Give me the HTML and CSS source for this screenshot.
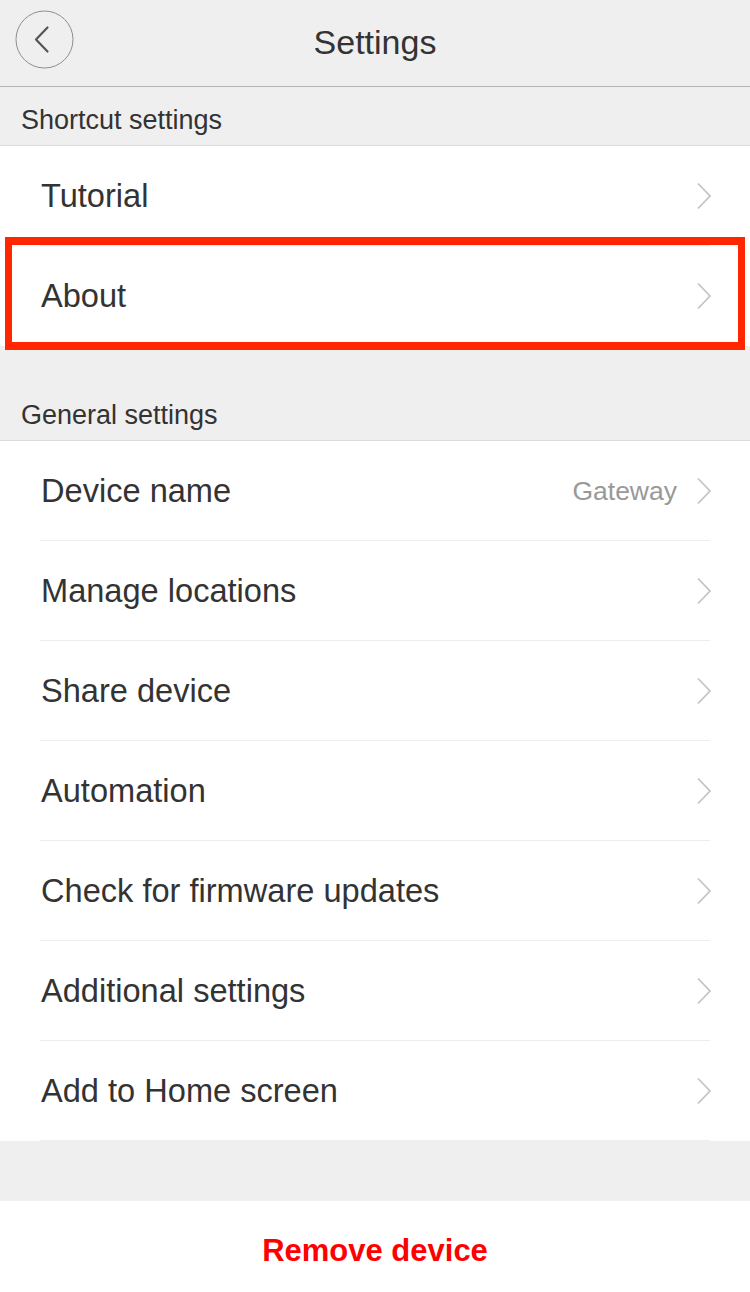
FILE: index.html
```html
<!DOCTYPE html>
<html>
<head>
<meta charset="utf-8">
<link rel="stylesheet" href="styles.css">
</head>
<body>
<div class="page">
  <header class="topbar">
    <button class="back" aria-label="Back">
      <svg width="60" height="60" viewBox="0 0 60 60">
        <circle cx="29.5" cy="29.5" r="28.5" fill="none" stroke="#8e8e8e" stroke-width="1"/>
        <path d="M32.5 17.5 L21 29.5 L32.5 41.5" fill="none" stroke="#555" stroke-width="2.2" stroke-linecap="round" stroke-linejoin="round"/>
      </svg>
    </button>
    <h1 class="title">Settings</h1>
  </header>

  <div class="section-title first">Shortcut settings</div>
  <div class="group">
    <div class="row"><div class="row-inner"><span class="label">Tutorial</span><span class="right"><svg class="chev" width="16" height="28" viewBox="0 0 16 28"><path d="M2 1.5 L14 14 L2 26.5" fill="none" stroke="#c4c4c4" stroke-width="1.8"/></svg></span></div></div>
    <div class="row highlighted"><div class="row-inner"><span class="label">About</span><span class="right"><svg class="chev" width="16" height="28" viewBox="0 0 16 28"><path d="M2 1.5 L14 14 L2 26.5" fill="none" stroke="#c4c4c4" stroke-width="1.8"/></svg></span></div><div class="mark"></div></div>
  </div>

  <div class="section-title second">General settings</div>
  <div class="group">
    <div class="row"><div class="row-inner"><span class="label">Device name</span><span class="right"><span class="value">Gateway</span><svg class="chev" width="16" height="28" viewBox="0 0 16 28"><path d="M2 1.5 L14 14 L2 26.5" fill="none" stroke="#c4c4c4" stroke-width="1.8"/></svg></span></div></div>
    <div class="row"><div class="row-inner"><span class="label">Manage locations</span><span class="right"><svg class="chev" width="16" height="28" viewBox="0 0 16 28"><path d="M2 1.5 L14 14 L2 26.5" fill="none" stroke="#c4c4c4" stroke-width="1.8"/></svg></span></div></div>
    <div class="row"><div class="row-inner"><span class="label">Share device</span><span class="right"><svg class="chev" width="16" height="28" viewBox="0 0 16 28"><path d="M2 1.5 L14 14 L2 26.5" fill="none" stroke="#c4c4c4" stroke-width="1.8"/></svg></span></div></div>
    <div class="row"><div class="row-inner"><span class="label">Automation</span><span class="right"><svg class="chev" width="16" height="28" viewBox="0 0 16 28"><path d="M2 1.5 L14 14 L2 26.5" fill="none" stroke="#c4c4c4" stroke-width="1.8"/></svg></span></div></div>
    <div class="row"><div class="row-inner"><span class="label">Check for firmware updates</span><span class="right"><svg class="chev" width="16" height="28" viewBox="0 0 16 28"><path d="M2 1.5 L14 14 L2 26.5" fill="none" stroke="#c4c4c4" stroke-width="1.8"/></svg></span></div></div>
    <div class="row"><div class="row-inner"><span class="label">Additional settings</span><span class="right"><svg class="chev" width="16" height="28" viewBox="0 0 16 28"><path d="M2 1.5 L14 14 L2 26.5" fill="none" stroke="#c4c4c4" stroke-width="1.8"/></svg></span></div></div>
    <div class="row"><div class="row-inner"><span class="label">Add to Home screen</span><span class="right"><svg class="chev" width="16" height="28" viewBox="0 0 16 28"><path d="M2 1.5 L14 14 L2 26.5" fill="none" stroke="#c4c4c4" stroke-width="1.8"/></svg></span></div></div>
  </div>

  <div class="remove">Remove device</div>
</div>
</body>
</html>
```

FILE: styles.css
```css
* { box-sizing: border-box; }
html, body { margin: 0; padding: 0; }
body {
  background: #efefef;
  font-family: "Liberation Sans", Arial, sans-serif;
  color: #333;
  width: 750px;
  height: 1292px;
  overflow: hidden;
}
.page { display: flex; flex-direction: column; }

.topbar {
  height: 87px;
  border-bottom: 1px solid #b4b4b4;
  display: flex;
  align-items: center;
  justify-content: center;
  position: relative;
  background: #efefef;
}
.back {
  position: absolute;
  left: 15px;
  top: 10px;
  width: 60px;
  height: 60px;
  padding: 0;
  border: 0;
  background: none;
}
.back svg { display: block; }
.title {
  margin: 0;
  font-size: 34px;
  font-weight: normal;
  color: #333;
  padding-bottom: 2px;
}

.section-title {
  height: 59px;
  border-bottom: 1px solid #dcdcdc;
  padding-left: 21px;
  font-size: 27px;
  color: #333;
  display: flex;
  align-items: flex-end;
  padding-bottom: 9px;
}
.section-title.second { margin-top: 36px; }

.group { background: #fff; }
.row { position: relative; height: 100px; }
.row-inner {
  margin: 0 40px;
  height: 100px;
  border-bottom: 1px solid #ededed;
  display: flex;
  align-items: center;
  justify-content: space-between;
  padding-left: 1px;
  padding-top: 1px;
}
.label { font-size: 32.6px; color: #333; }
.right { display: flex; align-items: center; gap: 19px; }
.value { font-size: 26.5px; color: #999; }
.chev { display: block; margin-right: -2px; }

.mark {
  position: absolute;
  left: 5px;
  right: 5px;
  top: -9px;
  bottom: -4px;
  border: 8px solid #ff2600;
  border-left-width: 7px;
  border-right-width: 7px;
}

.remove {
  margin-top: 60px;
  background: #fff;
  height: 100px;
  display: flex;
  align-items: center;
  justify-content: center;
  color: #ff0000;
  font-size: 31px;
  font-weight: bold;
}
```
